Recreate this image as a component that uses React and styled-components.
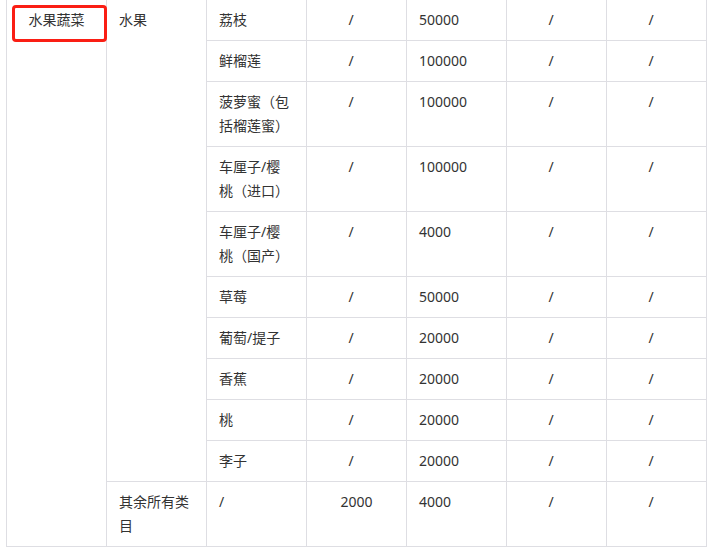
import React from "react";
import styled, { createGlobalStyle } from "styled-components";

const GlobalStyle = createGlobalStyle`
  html, body {
    margin: 0;
    padding: 0;
    background: #ffffff;
  }
  body {
    font-family: "Noto Sans", "Noto Sans CJK SC", sans-serif;
    color: #333333;
  }
`;

const Page = styled.div`
  width: 715px;
  height: 547px;
  overflow: hidden;
  padding-left: 6px;
  box-sizing: border-box;
`;

const TableWrap = styled.div`
  position: relative;
  width: 701px;
  margin-top: -1px;
`;

const Table = styled.table`
  width: 701px;
  table-layout: fixed;
  border-collapse: collapse;
  font-size: 14px;
  line-height: 24px;
`;

const Col = styled.col`
  width: 100px;
`;

const Cell = styled.td`
  border: 1px solid #dedee3;
  padding: 8px ${(props) => (props.$slash ? "23px" : "12px")} 8px 12px;
  vertical-align: top;
  text-align: ${(props) => props.$align || "left"};
  color: #333333;
  word-break: break-all;
`;

// red annotation box drawn over the first category cell
const Highlight = styled.div`
  position: absolute;
  left: 6px;
  top: 6px;
  width: 95px;
  height: 37px;
  box-sizing: border-box;
  border: 3px solid #fa1e14;
  border-radius: 4px;
  pointer-events: none;
`;

const align = ["center", "left", "left", "center", "left", "center", "center"];

const fruits = [
  { name: "荔枝", amount: "50000" },
  { name: "鲜榴莲", amount: "100000" },
  { name: ["菠萝蜜（包", "括榴莲蜜）"], amount: "100000" },
  { name: ["车厘子/樱", "桃（进口）"], amount: "100000" },
  { name: ["车厘子/樱", "桃（国产）"], amount: "4000" },
  { name: "草莓", amount: "50000" },
  { name: "葡萄/提子", amount: "20000" },
  { name: "香蕉", amount: "20000" },
  { name: "桃", amount: "20000" },
  { name: "李子", amount: "20000" },
];

const Lines = ({ text }) =>
  Array.isArray(text)
    ? text.map((line, i) => (
        <React.Fragment key={i}>
          {i > 0 && <br />}
          {line}
        </React.Fragment>
      ))
    : text;

const Slash = ({ col }) => (
  <Cell $align={align[col]} $slash={align[col] === "center"}>
    /
  </Cell>
);

export default function App() {
  return (
    <>
      <GlobalStyle />
      <Page>
        <TableWrap>
          <Table>
            <colgroup>
              {align.map((_, i) => (
                <Col key={i} />
              ))}
            </colgroup>
            <tbody>
              {fruits.map((f, i) => (
                <tr key={i}>
                  {i === 0 && (
                    <Cell $align={align[0]} rowSpan={fruits.length + 1}>
                      水果蔬菜
                    </Cell>
                  )}
                  {i === 0 && (
                    <Cell $align={align[1]} rowSpan={fruits.length}>
                      水果
                    </Cell>
                  )}
                  <Cell $align={align[2]}>
                    <Lines text={f.name} />
                  </Cell>
                  <Slash col={3} />
                  <Cell $align={align[4]}>{f.amount}</Cell>
                  <Slash col={5} />
                  <Slash col={6} />
                </tr>
              ))}
              <tr>
                <Cell $align={align[1]}>
                  <Lines text={["其余所有类", "目"]} />
                </Cell>
                <Slash col={2} />
                <Cell $align={align[3]}>2000</Cell>
                <Cell $align={align[4]}>4000</Cell>
                <Slash col={5} />
                <Slash col={6} />
              </tr>
            </tbody>
          </Table>
          <Highlight />
        </TableWrap>
      </Page>
    </>
  );
}
